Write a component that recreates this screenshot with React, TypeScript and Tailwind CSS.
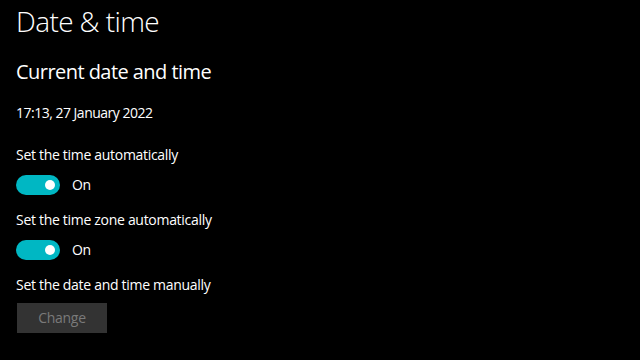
import React from "react";

function Toggle() {
  return (
    <div className="flex items-center h-[20px]">
      <div className="w-[44px] h-[20px] rounded-full bg-[#00b7c3] flex items-center justify-end pr-[5px]">
        <div className="w-[10px] h-[10px] rounded-full bg-white" />
      </div>
      <span className="ml-[12px] text-[14px] leading-[20px] tracking-[-0.3px]">On</span>
    </div>
  );
}

export default function App() {
  return (
    <div
      className="w-[640px] h-[360px] bg-black text-white pl-[16px] pt-[3px] overflow-hidden"
      style={{ fontFamily: '"Open Sans", "Noto Sans", sans-serif' }}
    >
      <h1 className="text-[28px] leading-[36px] font-light tracking-[-0.6px]">Date &amp; time</h1>
      <h2 className="mt-[19px] text-[20px] leading-[28px] font-normal tracking-[-0.55px]">Current date and time</h2>
      <p className="mt-[17px] text-[14px] leading-[20px] tracking-[-0.5px]">17:13, 27 January 2022</p>
      <p className="mt-[22px] text-[14px] leading-[20px] tracking-[-0.3px]">Set the time automatically</p>
      <div className="mt-[10px]">
        <Toggle />
      </div>
      <p className="mt-[15px] text-[14px] leading-[20px] tracking-[-0.3px]">Set the time zone automatically</p>
      <div className="mt-[10px]">
        <Toggle />
      </div>
      <p className="mt-[15px] text-[14px] leading-[20px] tracking-[-0.3px]">Set the date and time manually</p>
      <button className="mt-[8px] ml-[1px] w-[90px] h-[30px] bg-[#333333] text-[#7a7a7a] text-[14px] leading-[20px] tracking-[-0.3px] flex items-center justify-center">
        Change
      </button>
    </div>
  );
}
